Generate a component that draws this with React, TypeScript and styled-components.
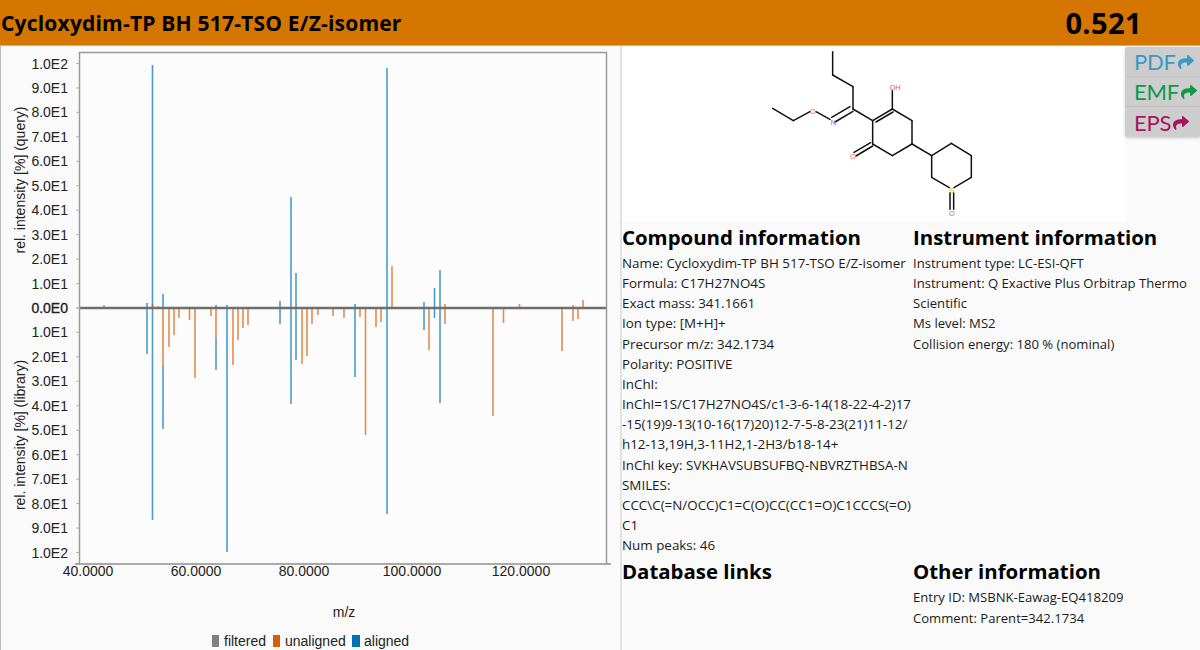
import React from "react";
import styled, { createGlobalStyle } from "styled-components";
import { FaShare } from "react-icons/fa";

const Global = createGlobalStyle`
  html, body { margin: 0; padding: 0; background: #fafafa; }
  body { font-family: "Open Sans", "Noto Sans", sans-serif; color: #111; }
`;

const Page = styled.div`
  width: 1200px;
  height: 650px;
  overflow: hidden;
  display: flex;
  flex-direction: column;
  background: #fafafa;
`;
const Header = styled.header`
  flex: 0 0 46px;
  box-sizing: border-box;
  border-bottom: 1px solid #bdb3a5;
  background: #d47600;
  display: flex;
  align-items: center;
  justify-content: space-between;
  padding: 0 58px 0 1px;
  color: #000;
  font-weight: 700;
`;
const Title = styled.h1`
  margin: 0;
  font-size: 21px;
  font-weight: 700;
  letter-spacing: 0.2px;
`;
const Score = styled.div`
  font-size: 29px;
  letter-spacing: 0.4px;
`;
const Main = styled.main`
  flex: 1;
  display: grid;
  grid-template-columns: 620px 1fr;
  min-height: 0;
`;
const ChartPane = styled.section`
  box-sizing: border-box;
  border-left: 1px solid #bbb;
  min-width: 0;
`;
const ChartSvg = styled.svg`
  display: block;
  margin-left: -1px;
`;
const Tick = styled.text`
  font-family: "Liberation Sans", Arial, sans-serif;
  font-size: 14px;
  fill: #222;
`;
const ZeroTick = styled(Tick)`
  stroke: #222;
  stroke-width: 0.35px;
`;
const InfoPane = styled.section`
  box-sizing: border-box;
  border-left: 2px solid #e2e2e2;
  position: relative;
  min-width: 0;
`;
const StructureBox = styled.div`
  width: 503px;
  height: 175px;
  background: #fff;
`;
const Tools = styled.div`
  position: absolute;
  top: 1px;
  right: 0;
  width: 75px;
  background: #cdcdcd;
  border-radius: 3px 0 0 3px;
  box-shadow: 0 1px 3px rgba(0, 0, 0, 0.2);
  display: flex;
  flex-direction: column;
`;
const Tool = styled.div<{ $color: string }>`
  box-sizing: border-box;
  height: 30px;
  display: flex;
  align-items: center;
  padding-left: 9px;
  font-family: "Lato", "Open Sans", sans-serif;
  font-size: 22px;
  letter-spacing: -0.2px;
  color: ${(p) => p.$color};
  border-bottom: 1px solid #c2c2c2;
  &:last-child { border-bottom: 0; }
  svg { width: 20px; height: 16px; margin-left: 0; margin-top: 1px; }
`;
const InfoGrid = styled.div`
  display: grid;
  grid-template-columns: 291px 1fr;
`;
const Column = styled.div`
  min-width: 0;
  &:nth-child(even) { padding-right: 4px; }
`;
const Heading = styled.h2`
  margin: 0;
  height: 32px;
  line-height: 32px;
  font-size: 20.4px;
  font-weight: 700;
  color: #000;
`;
const Line = styled.div`
  font-size: 13.4px;
  line-height: 20.15px;
  color: #1a1a1a;
`;
const Wrapped = styled(Line)`
  word-break: break-all;
`;
const NarrowLine = styled(Line)`
  font-size: 13.1px;
`;
const BottomRow = styled.div`
  grid-column: 1 / 3;
  display: grid;
  grid-template-columns: 291px 1fr;
`;

const zeroY = 308;
const yTicks = [100, 90, 80, 70, 60, 50, 40, 30, 20, 10];
const fmt = (v: number) => (v === 100 ? "1.0E2" : `${(v / 10).toFixed(1)}E1`);
const xTicks = [
  [88, "40.0000"],
  [196, "60.0000"],
  [304, "80.0000"],
  [412, "100.0000"],
  [521, "120.0000"],
] as const;

const BLUE = "#0072b2";
const ORANGE = "#d55e00";

// x, y1, y2 for each part of a peak
const orange: number[][] = [
  [104, 305, 308], [152.5, 304, 308], [158, 306, 308], [163, 308, 365], [169, 308, 347], [174, 308, 335],
  [179, 308, 318], [189.5, 308, 320], [195, 308, 378], [211, 308, 316], [216, 308, 338], [233, 308, 365],
  [238, 308, 340], [243, 308, 328], [248, 308, 325], [302, 308, 364], [307, 308, 356], [312, 308, 324],
  [318, 308, 315], [333, 308, 316], [344, 308, 318], [360, 308, 317], [365.5, 308, 435], [376, 308, 327],
  [381, 308, 322], [392, 266, 308], [429, 308, 350], [445, 304, 324], [493, 308, 416], [503.5, 308, 323],
  [519.5, 304, 308], [562, 308, 351], [573, 305, 321], [578, 308, 319], [583, 300, 308],
];
const blue: number[][] = [
  [147, 303, 354], [152.5, 65, 520], [163, 294, 308], [163, 365, 429], [216, 305, 308], [216, 338, 370],
  [227, 305, 552], [280, 301, 324], [291, 197, 404], [296, 273, 360], [355, 304, 377], [387, 68, 514],
  [424, 302, 330], [434.5, 288, 318], [440, 270, 403],
];

const legend = [
  { x: 212, w: 7, c: "#808080", tx: 224, label: "filtered" },
  { x: 273, w: 7, c: ORANGE, tx: 285, label: "unaligned" },
  { x: 352, w: 8, c: BLUE, tx: 364, label: "aligned" },
];

function Chart() {
  // coordinates are page-based; the svg starts below the header
  return (
    <ChartSvg width={620} height={604} viewBox="0 46 620 604">
      <rect x={79} y={52} width={527} height={512} fill="#fcfcfc" />
      {yTicks.map((v) => {
        const dy = v * 2.445;
        return (
          <React.Fragment key={v}>
            <line x1={76} x2={79} y1={zeroY - dy} y2={zeroY - dy} stroke="#bbb" />
            <line x1={76} x2={79} y1={zeroY + dy} y2={zeroY + dy} stroke="#bbb" />
            <Tick x={68} y={zeroY - dy + 5} textAnchor="end">{fmt(v)}</Tick>
            <Tick x={68} y={zeroY + dy + 5} textAnchor="end">{fmt(v)}</Tick>
          </React.Fragment>
        );
      })}
      <ZeroTick x={68} y={zeroY + 5} textAnchor="end">0.0E0</ZeroTick>
      <line x1={76} x2={79} y1={zeroY} y2={zeroY} stroke="#999" />
      {xTicks.map(([x, l]) => (
        <React.Fragment key={l}>
          <line x1={x} x2={x} y1={564} y2={567} stroke="#bbb" />
          <Tick x={x} y={576} textAnchor="middle">{l}</Tick>
        </React.Fragment>
      ))}
      <Tick transform="translate(24.5 180) rotate(-90)" textAnchor="middle">rel. intensity [%] (query)</Tick>
      <Tick transform="translate(24.5 435) rotate(-90)" textAnchor="middle">rel. intensity [%] (library)</Tick>
      <Tick x={344} y={617} textAnchor="middle">m/z</Tick>
      {legend.map((l) => (
        <React.Fragment key={l.label}>
          <rect x={l.x} y={635} width={l.w} height={12} fill={l.c} />
          <Tick x={l.tx} y={646}>{l.label}</Tick>
        </React.Fragment>
      ))}
      {blue.map(([x, a, b], i) => (
        <line key={`b${i}`} x1={x} x2={x} y1={a} y2={b} stroke={BLUE} strokeWidth={1.6} strokeOpacity={0.7} />
      ))}
      {orange.map(([x, a, b], i) => (
        <line key={`o${i}`} x1={x} x2={x} y1={a} y2={b} stroke={ORANGE} strokeWidth={1.6} strokeOpacity={0.7} />
      ))}
      <line x1={79} x2={606} y1={zeroY} y2={zeroY} stroke="#6e6e6e" strokeWidth={2.6} />
      <path d="M79.5 564V52.5H606.5V564" fill="none" stroke="#9a9a9a" strokeWidth={1.5} />
      <line x1={75} x2={611} y1={564} y2={564} stroke="#8f8f8f" strokeWidth={1.5} />
    </ChartSvg>
  );
}

// zoom-crop coordinates converted to the structure box
const mx = (X: number) => 128 + X / 3;
const my = (Y: number) => Y / 3 - 6;
const bonds: number[][] = [
  [248, 35, 248, 105], [248, 105, 309, 140], [309, 140, 309, 207], [309, 207, 368, 242],
  [300, 200, 245, 232], [309, 214, 255, 246], [240, 238, 198, 215], [180, 215, 130, 242], [130, 242, 68, 205],
  [368, 242, 427, 207], [378, 246, 429, 216], [427, 207, 427, 152], [427, 207, 486, 242], [486, 242, 486, 312],
  [486, 312, 427, 347], [427, 347, 368, 312], [368, 312, 368, 242], [368, 318, 318, 348], [362, 308, 312, 337],
  [486, 312, 545, 347], [545, 347, 604, 310], [604, 310, 664, 347], [664, 347, 664, 412], [664, 412, 612, 443],
  [598, 443, 545, 412], [545, 412, 545, 347], [600, 458, 600, 508], [611, 458, 611, 508],
];
const atoms = [
  { X: 189, Y: 221, t: "O", c: "#ff5050" },
  { X: 250, Y: 255, t: "N", c: "#6f7ff0" },
  { X: 435, Y: 150, t: "OH", c: "#ff5050" },
  { X: 309, Y: 357, t: "O", c: "#ff5050" },
  { X: 606, Y: 460, t: "S", c: "#c8c040" },
  { X: 606, Y: 527, t: "O", c: "#ff5050" },
];
const AtomLabel = styled.text`
  font-family: "Liberation Sans", Arial, sans-serif;
  font-size: 7.5px;
`;

function Structure() {
  return (
    <svg width={503} height={175} viewBox="0 0 503 175">
      {bonds.map(([a, b, c, d], i) => (
        <line key={i} x1={mx(a)} y1={my(b)} x2={mx(c)} y2={my(d)} stroke="#111" strokeWidth={1.5} strokeLinecap="round" />
      ))}
      {atoms.map((a, i) => (
        <AtomLabel key={i} x={mx(a.X)} y={my(a.Y)} fill={a.c} textAnchor="middle">{a.t}</AtomLabel>
      ))}
    </svg>
  );
}

const compound = [
  "Name: Cycloxydim-TP BH 517-TSO E/Z-isomer",
  "Formula: C17H27NO4S",
  "Exact mass: 341.1661",
  "Ion type: [M+H]+",
  "Precursor m/z: 342.1734",
  "Polarity: POSITIVE",
  "InChI:",
];

export default function App() {
  return (
    <Page>
      <Global />
      <Header>
        <Title>Cycloxydim-TP BH 517-TSO E/Z-isomer</Title>
        <Score>0.521</Score>
      </Header>
      <Main>
        <ChartPane>
          <Chart />
        </ChartPane>
        <InfoPane>
          <StructureBox>
            <Structure />
          </StructureBox>
          <Tools>
            <Tool $color="#3a9ac4">PDF<FaShare /></Tool>
            <Tool $color="#0a9a48">EMF<FaShare /></Tool>
            <Tool $color="#a8155f">EPS<FaShare /></Tool>
          </Tools>
          <InfoGrid>
            <Column>
              <Heading>Compound information</Heading>
              {compound.map((l) => <Line key={l}>{l}</Line>)}
              <Wrapped>InChI=1S/C17H27NO4S/c1-3-6-14(18-22-4-2)17-15(19)9-13(10-16(17)20)12-7-5-8-23(21)11-12/h12-13,19H,3-11H2,1-2H3/b18-14+</Wrapped>
              <Wrapped>InChI key: SVKHAVSUBSUFBQ-NBVRZTHBSA-N</Wrapped>
              <Line>SMILES:</Line>
              <Wrapped>CCC\C(=N/OCC)C1=C(O)CC(CC1=O)C1CCCS(=O)C1</Wrapped>
              <Line>Num peaks: 46</Line>
            </Column>
            <Column>
              <Heading>Instrument information</Heading>
              <NarrowLine>Instrument type: LC-ESI-QFT</NarrowLine>
              <NarrowLine>Instrument: Q Exactive Plus Orbitrap Thermo Scientific</NarrowLine>
              <NarrowLine>Ms level: MS2</NarrowLine>
              <NarrowLine>Collision energy: 180 % (nominal)</NarrowLine>
            </Column>
            <BottomRow>
              <Column>
                <Heading>Database links</Heading>
              </Column>
              <Column>
                <Heading>Other information</Heading>
                <NarrowLine>Entry ID: MSBNK-Eawag-EQ418209</NarrowLine>
                <NarrowLine>Comment: Parent=342.1734</NarrowLine>
              </Column>
            </BottomRow>
          </InfoGrid>
        </InfoPane>
      </Main>
    </Page>
  );
}
